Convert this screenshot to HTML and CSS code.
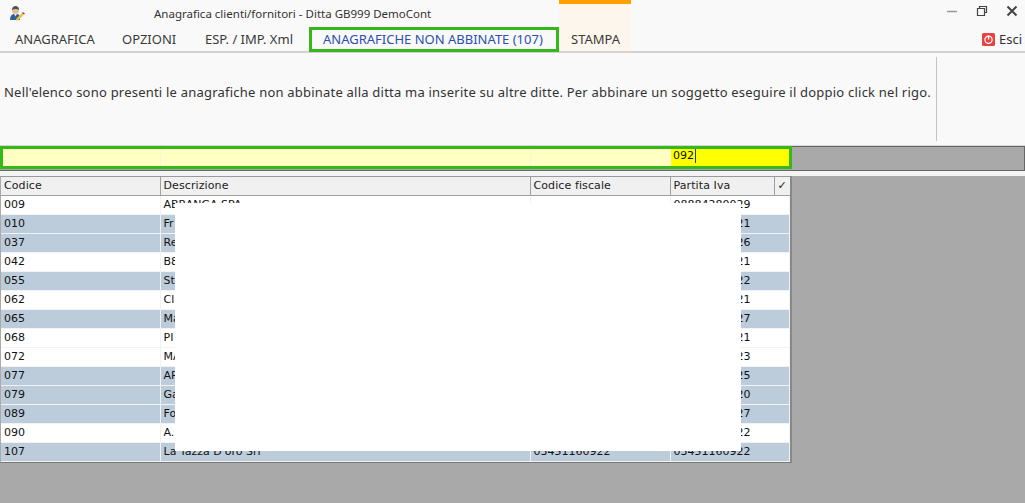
FILE: index.html
```html
<!DOCTYPE html>
<html lang="it">
<head>
<meta charset="utf-8">
<title>Anagrafica clienti/fornitori</title>
<link rel="stylesheet" href="styles.css">
</head>
<body>
<div class="app">
  <header class="ribbon">
    <div class="context-tab"></div>
    <div class="titlebar">
      <svg class="app-icon" width="16" height="16" viewBox="0 0 16 16">
        <path d="M1 15c0-4 2-6 4-6h3c2 0 3 2 3 4v2z" fill="#2f5f9e"/>
        <path d="M5 9l1.500 2.500L8 9z" fill="#e8e8e8"/>
        <circle cx="6.500" cy="5.500" r="3.500" fill="#e9bd94"/>
        <path d="M3 5c0-3 1.500-4 3.500-4S10 2 10 5C8 3.500 5 3.500 3 5z" fill="#4a5560"/>
        <path d="M7 14l6-6 2 1.500-6 6H7z" fill="#e9c13a"/>
        <path d="M13 8l1-1 2 1.500-1 1z" fill="#d03a2a"/>
      </svg>
      <div class="title">Anagrafica clienti/fornitori - Ditta GB999 DemoCont</div>
      <div class="winctrl">
        <svg width="12" height="12" viewBox="0 0 12 12"><path d="M1 6.500h10" stroke="#9a9a9a" stroke-width="1.500"/></svg>
        <svg width="12" height="12" viewBox="0 0 12 12"><path d="M3.500 3V1.500h7v6H8.500M1.500 3.500h7v7h-7z" fill="none" stroke="#444" stroke-width="1.200"/></svg>
        <svg width="12" height="12" viewBox="0 0 12 12"><path d="M1.500 1.500l9 9M10.500 1.500l-9 9" stroke="#444" stroke-width="2"/></svg>
      </div>
    </div>
    <nav class="tabs">
      <span class="tab tab-a">ANAGRAFICA</span>
      <span class="tab tab-b">OPZIONI</span>
      <span class="tab tab-c">ESP. / IMP. Xml</span>
      <span class="tab tab-active">ANAGRAFICHE NON ABBINATE (107)</span>
      <span class="tab tab-d">STAMPA</span>
      <span class="exit">
        <svg width="13" height="13" viewBox="0 0 13 13">
          <rect width="13" height="13" rx="1.500" fill="#e8423f"/>
          <circle cx="6.500" cy="6.800" r="3.600" fill="none" stroke="#fff" stroke-width="1.200"/>
          <path d="M6.500 2.500v4" stroke="#fff" stroke-width="1.400"/>
        </svg>
        Esci
      </span>
    </nav>
  </header>

  <section class="info">
    <p class="info-text">Nell'elenco sono presenti le anagrafiche non abbinate alla ditta ma inserite su altre ditte. Per abbinare un soggetto eseguire il doppio click nel rigo.</p>
    <div class="info-side"></div>
  </section>

  <section class="filter">
    <div class="filter-cells">
      <div class="fc fc-1"></div>
      <div class="fc fc-2"></div>
      <div class="fc fc-3"></div>
      <div class="fc fc-4"><span class="typed">092</span></div>
    </div>
  </section>
  <div class="strip"></div>

  <main class="work">
    <div class="grid-wrap">
      <table class="grid">
        <colgroup>
          <col class="c1"><col class="c2"><col class="c3"><col class="c4"><col class="c5">
        </colgroup>
        <thead>
          <tr><th>Codice</th><th>Descrizione</th><th>Codice fiscale</th><th>Partita Iva</th><th class="chk">✓</th></tr>
        </thead>
        <tbody>
          <tr><td>009</td><td>ABRANGA SPA</td><td></td><td colspan="2">08884280029</td></tr>
          <tr class="alt"><td>010</td><td>Fr</td><td></td><td colspan="2" class="tail">21</td></tr>
          <tr class="alt"><td>037</td><td>Re</td><td></td><td colspan="2" class="tail">26</td></tr>
          <tr><td>042</td><td>B8</td><td></td><td colspan="2" class="tail">21</td></tr>
          <tr class="alt"><td>055</td><td>St</td><td></td><td colspan="2" class="tail">22</td></tr>
          <tr><td>062</td><td>Cl</td><td></td><td colspan="2" class="tail">21</td></tr>
          <tr class="alt"><td>065</td><td>Ma</td><td></td><td colspan="2" class="tail">27</td></tr>
          <tr><td>068</td><td>PI</td><td></td><td colspan="2" class="tail">21</td></tr>
          <tr><td>072</td><td>MA</td><td></td><td colspan="2" class="tail">23</td></tr>
          <tr class="alt"><td>077</td><td>AR</td><td></td><td colspan="2" class="tail">25</td></tr>
          <tr class="alt"><td>079</td><td>Ga</td><td></td><td colspan="2" class="tail">20</td></tr>
          <tr class="alt"><td>089</td><td>Fo</td><td></td><td colspan="2" class="tail">27</td></tr>
          <tr><td>090</td><td>A.</td><td></td><td colspan="2" class="tail">22</td></tr>
          <tr class="alt"><td>107</td><td>La Tazza D'oro Srl</td><td>03451160922</td><td colspan="2">03451160922</td></tr>
        </tbody>
      </table>
      <div class="mask"></div>
    </div>
  </main>
</div>
</body>
</html>
```

FILE: styles.css
```css
* { box-sizing: border-box; }
html, body { margin: 0; height: 100%; }
body { background: #a9a9a9; font-family: "Noto Sans", sans-serif; overflow: hidden; }
.app { display: flex; flex-direction: column; height: 503px; }

.ribbon { position: relative; height: 53px; background: #f9f9f9; border-bottom: 2px solid #d2d2d2; }
.context-tab { position: absolute; left: 559px; top: 0; width: 72px; height: 51px; background: #fdf6ec; border-top: 4px solid #ff9f00; }
.titlebar { position: relative; display: flex; align-items: center; height: 27px; }
.app-icon { margin: 0 0 2px 9px; }
.title { margin-left: 129px; font-size: 11.500px; color: #333; padding-bottom: 1px; }
.winctrl { margin-left: auto; display: flex; gap: 18px; padding: 0 7px 5px 0; }

.tabs { position: relative; display: flex; align-items: center; height: 24px; font-size: 13px; color: #3a3a3a; }
.tab { display: block; white-space: nowrap; }
.tab-a { width: 107px; margin-left: 15px; }
.tab-b { width: 83px; }
.tab-c { width: 104px; }
.tab-active { width: 250px; height: 25px; margin-top: 1px; padding-left: 11px; line-height: 19px; border: 3px solid #35b81a; color: #2a4fb0; }
.tab-d { margin-left: 12px; }
.exit { margin-left: auto; margin-right: 3px; display: flex; align-items: center; gap: 4px; color: #333; }

.info { display: flex; height: 93px; background: #f9f9f9; border-bottom: 1px solid #d6d6d6; padding-top: 4px; }
.info-text { margin: 0; flex: 1; padding: 26px 0 0 4px; font-size: 13px; letter-spacing: 0.215px; color: #333; white-space: nowrap; }
.info-side { width: 89px; height: 84px; border-left: 1px solid #c4c4c4; }

.filter { height: 25px; background: #a9a9a9; border: 1px solid #666; border-left: 0; }
.filter-cells { display: flex; width: 792px; height: 23px; margin-top: -1px; border: 3px solid #35b81a; background: #ffffc4; }
.fc { border-right: 1px solid #f6f6dc; height: 100%; }
.fc-1 { width: 158px; }
.fc-2 { width: 370px; }
.fc-3 { width: 140px; }
.fc-4 { flex: 1; border: 0; background: #ffff00; padding-left: 2px; font: 11px/13px "DejaVu Sans", sans-serif; color: #111; }
.typed { display: inline-block; padding-right: 1px; border-right: 1px solid #1a3fc0; line-height: 14px; }

.strip { height: 5px; background: #f4f4f4; }

.work { flex: 1; }
.grid-wrap { position: relative; width: 792px; border-top: 1px solid #9a9a9a; border-bottom: 1px solid #777; border-right: 2px solid #888; background: #fff; border-left: 1px solid #aaa; }
.grid { width: 100%; table-layout: fixed; border-collapse: collapse; font: 11px "DejaVu Sans", sans-serif; color: #111; }
.c1 { width: 159px; }
.c2 { width: 370px; }
.c3 { width: 140px; }
.c5 { width: 15px; }
.grid th { height: 18px; padding: 0 3px; background: #f0f0f0; border-right: 1px solid #a0a0a0; border-bottom: 1px solid #a0a0a0; text-align: left; font-weight: 400; color: #222; letter-spacing: 0.100px; }
.grid th.chk { padding: 0; text-align: center; font-weight: 700; border-right: 0; }
.grid td { height: 19px; padding: 0 3px; border-right: 1px solid #f2f2f2; border-bottom: 1px solid #f2f2f2; white-space: nowrap; overflow: hidden; }
.grid tr.alt td { background: #bdccdb; }
.grid td.tail { padding-left: 66px; }
.mask { position: absolute; left: 174px; top: 26px; width: 566px; height: 248px; background: #fff; }
```
